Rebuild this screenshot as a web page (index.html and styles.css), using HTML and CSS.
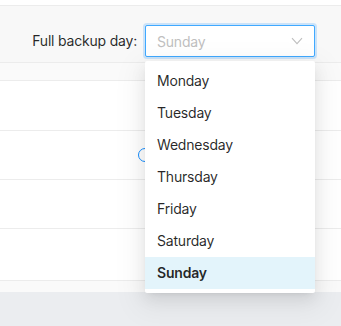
FILE: index.html
```html
<!DOCTYPE html>
<html lang="en">
<head>
  <meta charset="UTF-8">
  <meta name="viewport" content="width=device-width, initial-scale=1.0">
  <title>Backup settings</title>
  <link rel="stylesheet" href="styles.css">
</head>
<body>
  <div class="top-strip"></div>

  <div class="toolbar">
    <label class="field-label" for="backupDay">Full backup day:</label>
    <div class="select-wrap">
      <div class="select select-focused" id="backupDay">
        <span class="select-placeholder">Sunday</span>
        <svg class="select-arrow" width="12" height="8" viewBox="0 0 12 8">
          <path d="M1 1.2 L6 6.6 L11 1.2" fill="none" stroke="#bfbfbf" stroke-width="1.1"/>
        </svg>
      </div>

      <ul class="dropdown">
        <li class="dropdown-item">Monday</li>
        <li class="dropdown-item">Tuesday</li>
        <li class="dropdown-item">Wednesday</li>
        <li class="dropdown-item">Thursday</li>
        <li class="dropdown-item">Friday</li>
        <li class="dropdown-item">Saturday</li>
        <li class="dropdown-item dropdown-item-selected">Sunday</li>
      </ul>
    </div>
  </div>

  <div class="subhead"></div>

  <div class="rows">
    <div class="row row-first"></div>
    <div class="row"><span class="radio"></span></div>
    <div class="row"></div>
    <div class="row row-last"></div>
  </div>

  <div class="rows-end"></div>
  <footer class="footer"></footer>
</body>
</html>
```

FILE: styles.css
```css
* {
  margin: 0;
  padding: 0;
  box-sizing: border-box;
}

:root {
  --text-color: rgba(0, 0, 0, 0.85);
  --line-color: #ececec;
  --band-color: #f8f8f8;
  --primary: #40a9ff;
  --placeholder: #bfbfbf;
  --selected-bg: #e3f4fb;
}

body {
  font-family: 'Inter', 'Noto Sans', sans-serif;
  font-size: 14px;
  letter-spacing: -0.2px;
  color: var(--text-color);
  background: #fff;
  overflow: hidden;
}

.top-strip {
  height: 6px;
  border-bottom: 1px solid var(--line-color);
}

.toolbar {
  height: 57px;
  padding: 19px 26px 0 0;
  background: var(--band-color);
  border-bottom: 1px solid var(--line-color);
  display: flex;
  justify-content: flex-end;
  align-items: flex-start;
  gap: 8px;
}

.field-label {
  line-height: 32px;
  color: var(--text-color);
}

.select-wrap {
  position: relative;
  width: 170px;
}

.select {
  height: 32px;
  padding: 0 11px;
  border: 1px solid #d9d9d9;
  border-radius: 2px;
  background: #fff;
  display: flex;
  align-items: center;
  justify-content: space-between;
}

.select-focused {
  border-color: var(--primary);
  box-shadow: 0 0 0 2px rgba(24, 144, 255, 0.2);
}

.select-placeholder {
  color: var(--placeholder);
}

/* popup list, sits over the rows below */
.dropdown {
  position: absolute;
  top: 36px;
  left: 0;
  width: 100%;
  padding: 4px 0;
  list-style: none;
  background: #fff;
  border-radius: 2px;
  box-shadow: 0 3px 6px -4px rgba(0, 0, 0, 0.12),
              0 6px 16px 0 rgba(0, 0, 0, 0.08),
              0 9px 28px 8px rgba(0, 0, 0, 0.05);
  z-index: 10;
}

.dropdown-item {
  height: 32px;
  line-height: 32px;
  padding: 0 12px;
  color: var(--text-color);
}

.dropdown-item-selected {
  background: var(--selected-bg);
  font-weight: 600;
}

.subhead {
  height: 18px;
  background: #fafafa;
  border-bottom: 1px solid var(--line-color);
}

.row {
  height: 49px;
  border-bottom: 1px solid var(--line-color);
  display: flex;
  align-items: center;
  padding-left: 138px;
}

.row-first {
  height: 50px;
}

.row-last {
  height: 52px;
}

.radio {
  width: 14px;
  height: 14px;
  border: 1.5px solid #1890ff;
  border-radius: 50%;
}

.rows-end {
  height: 11px;
  background: #fafafa;
}

.footer {
  height: 40px;
  background: #ebedf0;
}
```
